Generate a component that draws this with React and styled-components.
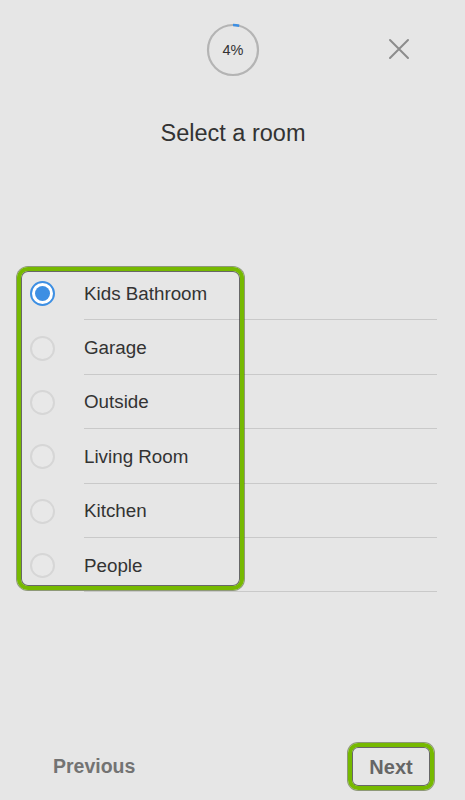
import React, { useState } from "react";
import styled, { createGlobalStyle } from "styled-components";

const Global = createGlobalStyle`
  html, body { margin: 0; padding: 0; background: #e6e6e6; }
  body { font-family: "Liberation Sans", Arial, sans-serif; -webkit-font-smoothing: antialiased; }
  * { box-sizing: border-box; }
`;

const Page = styled.div`
  width: 465px;
  height: 800px;
  display: flex;
  flex-direction: column;
  background: #e6e6e6;
  overflow: hidden;
`;

const Header = styled.div`
  position: relative;
  height: 100px;
  display: flex;
  align-items: center;
  justify-content: center;
`;

const Ring = styled.div`
  position: relative;
  width: 54px;
  height: 54px;
  display: flex;
  align-items: center;
  justify-content: center;
  margin-left: 1px;
  svg { position: absolute; inset: 0; }
`;

const RingLabel = styled.span`
  font-size: 14.5px;
  color: #333;
  position: relative;
`;

const CloseButton = styled.button`
  position: absolute;
  right: 55px;
  top: 38px;
  width: 22px;
  height: 22px;
  padding: 0;
  border: none;
  background: none;
  display: flex;
  align-items: center;
  justify-content: center;
`;

const Title = styled.h1`
  margin: 18px 0 0;
  font-size: 23.5px;
  line-height: 31px;
  font-weight: 400;
  color: #333;
  text-align: center;
  padding-left: 1px;
`;

const ListWrap = styled.div`
  position: relative;
  margin-top: 117px;
`;

const Row = styled.label`
  display: flex;
  align-items: center;
  height: 54.4px;
  padding-left: 30px;
  cursor: pointer;
`;

const Radio = styled.span`
  width: 25px;
  height: 25px;
  border-radius: 50%;
  border: 2px solid ${(p) => (p.$checked ? "#3d8fe3" : "#d6d6d6")};
  background: ${(p) => (p.$checked ? "#fff" : "#e8e8e8")};
  display: flex;
  align-items: center;
  justify-content: center;
  flex-shrink: 0;
  margin-top: 1px;
  &::after {
    content: "";
    width: 15px;
    height: 15px;
    border-radius: 50%;
    background: #3d8fe3;
    display: ${(p) => (p.$checked ? "block" : "none")};
  }
`;

const RowText = styled.span`
  margin-left: 29px;
  margin-right: 28px;
  flex: 1;
  height: 100%;
  display: flex;
  align-items: center;
  border-bottom: 1px solid #c9c9c9;
  font-size: 18.8px;
  color: #333;
  padding-top: 2px;
`;

const Highlight = styled.div`
  position: absolute;
  left: 17px;
  top: 1px;
  width: 227px;
  height: 323px;
  border: 4px solid #76b900;
  border-radius: 11px;
  box-shadow: 0 0 0 1px rgba(70, 90, 30, 0.55), inset 0 0 0 1px rgba(60, 60, 60, 0.75);
  pointer-events: none;
`;

const Footer = styled.div`
  margin-top: auto;
  height: 57px;
  padding: 0 31px 10px 53px;
  display: flex;
  align-items: center;
  justify-content: space-between;
`;

const NavButton = styled.button`
  border: none;
  background: none;
  padding: 0;
  font-family: inherit;
  font-size: 19.5px;
  font-weight: 700;
  color: #737373;
`;

const NextButton = styled(NavButton)`
  width: 86px;
  height: 47px;
  border: 4px solid #76b900;
  border-radius: 10px;
  box-shadow: 0 0 0 1px rgba(70, 90, 30, 0.55), inset 0 0 0 1px rgba(60, 60, 60, 0.75);
  color: #666;
  font-size: 20px;
  padding-top: 1px;
`;

const rooms = ["Kids Bathroom", "Garage", "Outside", "Living Room", "Kitchen", "People"];

export default function App() {
  const [selected, setSelected] = useState(0);
  const r = 25;
  const c = 2 * Math.PI * r;
  return (
    <Page>
      <Global />
      <Header>
        <Ring>
          <svg width="54" height="54" viewBox="0 0 54 54">
            <circle cx="27" cy="27" r={r} fill="none" stroke="#b4b4b4" strokeWidth="2.2" />
            <circle
              cx="27"
              cy="27"
              r={r}
              fill="none"
              stroke="#3d8fe3"
              strokeWidth="2.4"
              strokeDasharray={`${c * 0.04} ${c}`}
              transform="rotate(-90 27 27)"
            />
          </svg>
          <RingLabel>4%</RingLabel>
        </Ring>
        <CloseButton aria-label="Close">
          <svg width="22" height="22" viewBox="0 0 22 22">
            <path d="M2 2 L20 20 M20 2 L2 20" stroke="#8c8c8c" strokeWidth="2" strokeLinecap="round" />
          </svg>
        </CloseButton>
      </Header>
      <Title>Select a room</Title>
      <ListWrap>
        {rooms.map((room, i) => (
          <Row key={room} onClick={() => setSelected(i)}>
            <Radio $checked={selected === i} />
            <RowText>{room}</RowText>
          </Row>
        ))}
        <Highlight />
      </ListWrap>
      <Footer>
        <NavButton>Previous</NavButton>
        <NextButton>Next</NextButton>
      </Footer>
    </Page>
  );
}
